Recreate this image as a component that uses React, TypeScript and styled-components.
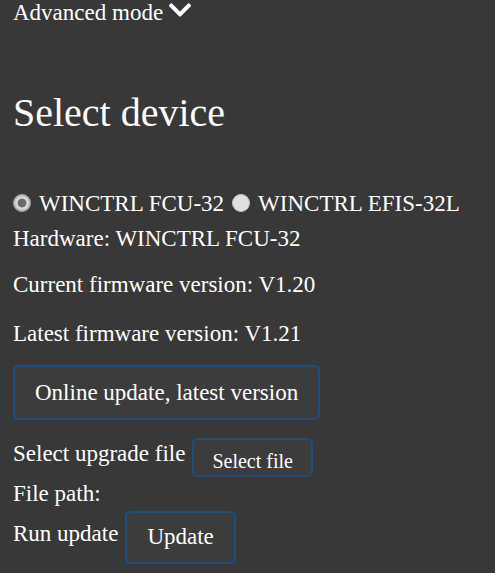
import React, { useState } from 'react';
import styled, { createGlobalStyle } from 'styled-components';

const GlobalStyle = createGlobalStyle`
    html, body {
        margin: 0;
        padding: 0;
        background: #383838;
    }
    body {
        font-family: 'Liberation Serif', 'Times New Roman', serif;
        color: #ffffff;
    }
`;

const Page = styled.div`
    padding: 0 13px;
    font-size: 23px;
    line-height: 26px;
    min-height: 573px;
    box-sizing: border-box;
`;

const Toggle = styled.div`
    cursor: pointer;
`;

const Chevron = styled.svg`
    width: 22px;
    height: 14px;
    vertical-align: 3px;
`;

const Title = styled.h1`
    font-size: 40px;
    line-height: 46px;
    font-weight: normal;
    margin: 64px 0 55px;
`;

const RadioRow = styled.div`
    display: flex;
    align-items: center;
`;

const Option = styled.label`
    display: inline-flex;
    align-items: center;
    margin-right: 8px;
`;

const Radio = styled.input`
    appearance: none;
    width: 18px;
    height: 18px;
    margin: 0 8px 3px 0;
    border-radius: 50%;
    box-sizing: border-box;
    background: #e0e0e0;
    border: 1px solid #c4c4c4;

    &:checked {
        background: radial-gradient(circle, #6b6b6b 0 4px, #d8d8d8 4.8px 6.4px, #b8b8b8 7.2px);
        border-color: #a8a8a8;
    }
`;

const Line = styled.div<{ $top?: number }>`
    margin-top: ${({ $top }) => $top || 0}px;
`;

const Button = styled.button<{ $small?: boolean }>`
    font-family: 'Liberation Serif', 'Times New Roman', serif;
    color: #ffffff;
    background: #3c3c3c;
    border: 2px solid #1e4e7a;
    border-radius: 5px;
    font-size: ${({ $small }) => ($small ? 20 : 23)}px;
    line-height: ${({ $small }) => ($small ? 23 : 26)}px;
    padding: ${({ $small }) => ($small ? '10px 18px 2px' : '13px 20px 12px')};
    cursor: pointer;
`;

const OnlineButton = styled(Button)`
    display: block;
    margin-top: 18px;
`;

const Row = styled.div<{ $top: number }>`
    display: flex;
    align-items: flex-start;
    gap: 7px;
    margin-top: ${({ $top }) => $top}px;
`;

const RowLabel = styled.span<{ $offset: number }>`
    margin-top: ${({ $offset }) => $offset}px;
`;

const UpdateButton = styled(Button)`
    padding: 11px 20px 12px;
`;

const devices = ['WINCTRL FCU-32', 'WINCTRL EFIS-32L'];

export default function App() {
    const [device, setDevice] = useState(devices[0]);

    return (
        <>
            <GlobalStyle />
            <Page>
                <Toggle>
                    Advanced mode{' '}
                    <Chevron viewBox="5 123 438 266">
                        <path
                            fill="#ffffff"
                            d="M207.029 381.476L12.686 187.132c-9.373-9.373-9.373-24.569 0-33.941l22.667-22.667c9.357-9.357 24.522-9.375 33.901-.04L224 284.505l154.745-154.021c9.379-9.335 24.544-9.317 33.901.04l22.667 22.667c9.373 9.373 9.373 24.569 0 33.941L240.971 381.476c-9.373 9.372-24.569 9.372-33.942 0z"
                        />
                    </Chevron>
                </Toggle>

                <Title>Select device</Title>

                <RadioRow>
                    {devices.map((d) => (
                        <Option key={d}>
                            <Radio
                                type="radio"
                                name="device"
                                checked={device === d}
                                onChange={() => setDevice(d)}
                            />
                            {d}
                        </Option>
                    ))}
                </RadioRow>
                <Line $top={9}>Hardware: {device}</Line>
                <Line $top={20}>Current firmware version: V1.20</Line>
                <Line $top={23}>Latest firmware version: V1.21</Line>

                <OnlineButton>Online update, latest version</OnlineButton>

                <Row $top={18}>
                    <RowLabel $offset={3}>Select upgrade file</RowLabel>
                    <Button $small>Select file</Button>
                </Row>
                <Line $top={4}>File path:</Line>
                <Row $top={4}>
                    <RowLabel $offset={10}>Run update</RowLabel>
                    <UpdateButton>Update</UpdateButton>
                </Row>
            </Page>
        </>
    );
}
